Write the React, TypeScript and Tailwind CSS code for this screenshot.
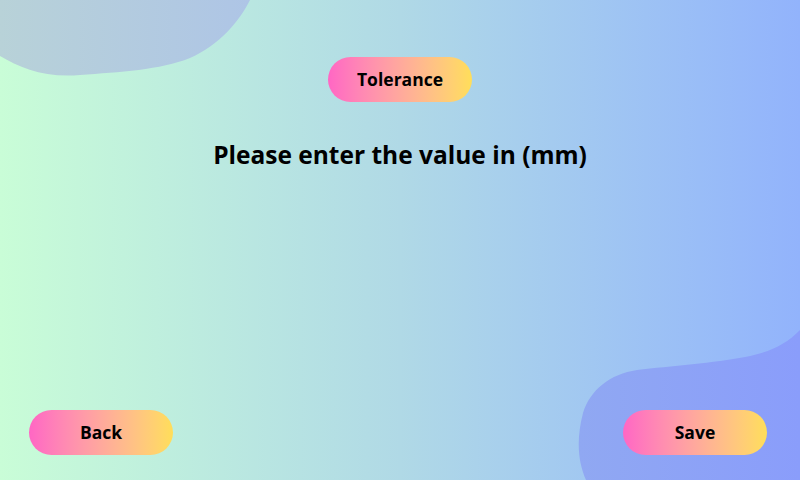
import React from 'react';

const Pill: React.FC<{ label: string }> = ({ label }) => (
  <button className="flex h-[45px] w-[144px] items-center justify-center rounded-full bg-gradient-to-r from-[#ff66c4] to-[#ffde59] text-[17.5px] font-bold text-black">
    {label}
  </button>
);

const App: React.FC = () => {
  return (
    <div className="relative h-[480px] w-[800px] overflow-hidden bg-gradient-to-r from-[#c9fdd7] via-[#b0d9e6] to-[#92b3fc] font-['Open_Sans','Liberation_Sans',sans-serif]">
      {/* decorative blobs */}
      <svg className="absolute left-0 top-0" width="260" height="90" viewBox="0 0 260 90">
        <defs>
          <linearGradient id="tl" x1="0" x2="1" y1="0" y2="0">
            <stop offset="0" stopColor="#b8d2d8" />
            <stop offset="1" stopColor="#aec5e6" />
          </linearGradient>
        </defs>
        <path d="M0 0 L250 0 C240 20 220 45 190 58 C160 70 120 72 80 75 C45 78 20 68 0 56 Z" fill="url(#tl)" />
      </svg>
      <svg className="absolute bottom-0 right-0" width="230" height="150" viewBox="570 330 230 150">
        <defs>
          <linearGradient id="br" x1="0" x2="1" y1="0" y2="0">
            <stop offset="0" stopColor="#90a8f2" />
            <stop offset="1" stopColor="#8a9dfb" />
          </linearGradient>
        </defs>
        <path d="M800 330 C785 345 770 352 745 357 C715 363 670 366 637 370 C610 374 590 390 583 413 C576 440 578 462 586 480 L800 480 Z" fill="url(#br)" />
      </svg>

      <div className="relative flex h-full flex-col items-center pt-[57px]">
        <Pill label="Tolerance" />
        <h1 className="mt-[35px] text-[24.5px] font-bold text-black">Please enter the value in (mm)</h1>
        <div className="mt-auto mb-[25px] flex w-full justify-between px-[29px] pr-[33px]">
          <Pill label="Back" />
          <Pill label="Save" />
        </div>
      </div>
    </div>
  );
};

export default App;
